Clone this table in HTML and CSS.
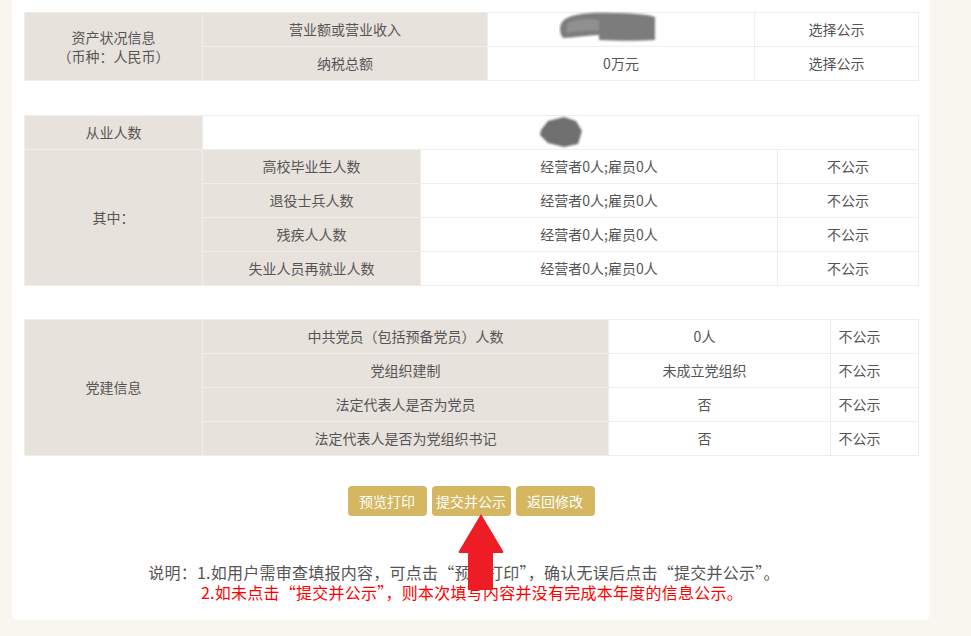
FILE: index.html
```html
<!DOCTYPE html>
<html lang="zh-CN">
<head>
<meta charset="utf-8">
<title>年度报告</title>
<link rel="stylesheet" href="styles.css">
</head>
<body>
<div class="page">
  <div class="panel">
    <table class="t t1">
      <colgroup><col style="width:178px"><col style="width:285px"><col style="width:267px"><col style="width:164px"></colgroup>
      <tr>
        <td class="lab two" rowspan="2">资产状况信息<br>（币种：人民币）</td>
        <td class="lab">营业额或营业收入</td>
        <td class="val blobcell"><svg class="blob1" width="100" height="32" viewBox="0 0 100 32"><defs><filter id="b1"><feGaussianBlur stdDeviation="1.2"/></filter></defs><g filter="url(#b1)"><path d="M4 10 C10 3 30 1 55 2 C70 2 88 3 96 6 L96 29 C80 30 60 30 40 29 L40 24 C30 24 14 27 4 27 C0 22 0 14 4 10 Z" fill="#7c7c7c"/><path d="M8 12 C18 8 30 7 40 9 L40 20 C28 19 16 20 8 22 Z" fill="#909090"/></g></svg></td>
        <td class="val">选择公示</td>
      </tr>
      <tr>
        <td class="lab">纳税总额</td>
        <td class="val">0万元</td>
        <td class="val">选择公示</td>
      </tr>
    </table>

    <table class="t t2">
      <colgroup><col style="width:178px"><col style="width:218px"><col style="width:357px"><col style="width:141px"></colgroup>
      <tr>
        <td class="lab">从业人数</td>
        <td class="val blobcell" colspan="3"><svg class="blob2" width="46" height="34" viewBox="0 0 46 34"><defs><filter id="b2"><feGaussianBlur stdDeviation="1"/></filter></defs><path filter="url(#b2)" d="M3 15 L10 6 L26 2 L38 6 L44 16 L40 29 L26 32 L10 28 L2 20 Z" fill="#6f6f6f"/></svg></td>
      </tr>
      <tr>
        <td class="lab" rowspan="4">其中：</td>
        <td class="lab">高校毕业生人数</td>
        <td class="val">经营者0人;雇员0人</td>
        <td class="val">不公示</td>
      </tr>
      <tr>
        <td class="lab">退役士兵人数</td>
        <td class="val">经营者0人;雇员0人</td>
        <td class="val">不公示</td>
      </tr>
      <tr>
        <td class="lab">残疾人人数</td>
        <td class="val">经营者0人;雇员0人</td>
        <td class="val">不公示</td>
      </tr>
      <tr>
        <td class="lab">失业人员再就业人数</td>
        <td class="val">经营者0人;雇员0人</td>
        <td class="val">不公示</td>
      </tr>
    </table>

    <table class="t t3">
      <colgroup><col style="width:178px"><col style="width:406px"><col style="width:222px"><col style="width:88px"></colgroup>
      <tr>
        <td class="lab" rowspan="4">党建信息</td>
        <td class="lab">中共党员（包括预备党员）人数</td>
        <td class="val">0人</td>
        <td class="val">不公示</td>
      </tr>
      <tr>
        <td class="lab">党组织建制</td>
        <td class="val">未成立党组织</td>
        <td class="val">不公示</td>
      </tr>
      <tr>
        <td class="lab">法定代表人是否为党员</td>
        <td class="val">否</td>
        <td class="val">不公示</td>
      </tr>
      <tr>
        <td class="lab">法定代表人是否为党组织书记</td>
        <td class="val">否</td>
        <td class="val">不公示</td>
      </tr>
    </table>

    <div class="actions">
      <button class="btn">预览打印</button>
      <button class="btn">提交并公示</button>
      <button class="btn">返回修改</button>
      <svg class="arrow" width="46" height="77" viewBox="0 0 46 77"><path d="M23 0 L45 37 Q46 39 44 39 L35 39 L35 76 L10 76 L10 39 L2 39 Q0 39 1 37 Z" fill="#ee1c25"/></svg>
    </div>

    <div class="notes">
      <p class="n1">说明：1.如用户需审查填报内容，可点击“预览打印”，确认无误后点击“提交并公示”。</p>
      <p class="n2">2.如未点击“提交并公示”，则本次填写内容并没有完成本年度的信息公示。</p>
    </div>
  </div>
</div>
</body>
</html>
```

FILE: styles.css
```css
html, body {
  margin: 0;
  padding: 0;
  background: #f9f6ef;
  font-family: "Microsoft YaHei", "Noto Sans CJK SC", "Noto Sans", sans-serif;
}

.page {
  width: 971px;
  height: 636px;
  overflow: hidden;
}

.panel {
  margin-left: 12px;
  width: 894px;
  padding: 12px 12px 18px;
  background: #fff;
  border-radius: 0 0 6px 6px;
}

.t {
  width: 894px;
  table-layout: fixed;
  border-collapse: collapse;
  font-size: 14px;
  color: #555;
}

.t1 {
  margin-bottom: 34px;
}

.t2 {
  margin-bottom: 33px;
}

.t3 {
  margin-bottom: 35px;
}

.t td {
  height: 33px;
  padding: 0;
  border: 1px solid #ece9e6;
  text-align: center;
  vertical-align: middle;
  line-height: 19px;
}

.t td.lab {
  background: #e8e2dc;
  border-color: #f1eeea;
}

.t td.val {
  background: #fff;
  border-color: #eeeeee;
}

.t3 td.val {
  padding-right: 30px;
}

.blobcell {
  position: relative;
}

.blob1 {
  position: absolute;
  left: 71px;
  top: -2px;
}

.blob2 {
  position: absolute;
  left: 335px;
  top: -1px;
}

.actions {
  position: relative;
  display: flex;
  justify-content: center;
  gap: 5px;
  margin-top: -5px;
}

.btn {
  width: 79px;
  height: 30px;
  border: none;
  border-radius: 4px;
  background: #d5b661;
  color: #fff;
  font-family: inherit;
  font-size: 14px;
  padding: 0;
  cursor: pointer;
}

.arrow {
  position: absolute;
  left: 434px;
  top: 28px;
}

.notes {
  margin-top: 46px;
  padding-right: 14px;
  text-align: center;
  font-size: 16px;
  line-height: 20px;
  letter-spacing: 0.25px;
}

.notes p {
  margin: 0;
}

.n1 {
  color: #555;
}

.n2 {
  color: #f00;
  padding-left: 16px;
}
```
